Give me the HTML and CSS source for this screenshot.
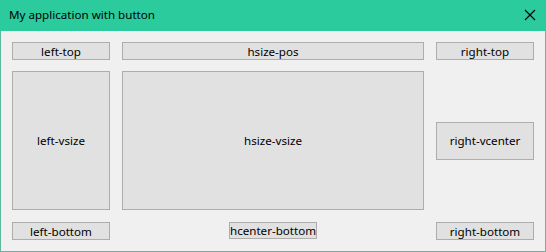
FILE: index.html
```html
<!DOCTYPE html>
<html lang="en">
<head>
  <meta charset="UTF-8">
  <title>My application with button</title>
  <link rel="stylesheet" href="styles.css">
</head>
<body>
  <div class="window">
    <div class="titlebar">
      <span class="title">My application with button</span>
      <svg class="close" width="12" height="12" viewBox="0 0 12 12">
        <path d="M1 1 L11 11 M11 1 L1 11" stroke="#000" stroke-width="1.1" fill="none" />
      </svg>
    </div>
    <div class="client">
      <button class="btn">left-top</button>
      <button class="btn">hsize-pos</button>
      <button class="btn">right-top</button>

      <button class="btn">left-vsize</button>
      <button class="btn">hsize-vsize</button>
      <div class="cell-vcenter">
        <button class="btn tall">right-vcenter</button>
      </div>

      <button class="btn">left-bottom</button>
      <div class="cell-hcenter">
        <button class="btn narrow">hcenter-bottom</button>
      </div>
      <button class="btn">right-bottom</button>
    </div>
  </div>
</body>
</html>
```

FILE: styles.css
```css
body { margin: 0; background: #f0f0f0; font-family: "Noto Sans", "Open Sans", sans-serif; }
.window {
  width: 544px;
  height: 251px;
  border: 1px solid #5fb9a1;
  border-top: none;
  background: #f0f0f0;
}
.titlebar {
  height: 31px;
  margin: 0 -1px;
  background: #2bcb9e;
  display: flex;
  align-items: center;
  justify-content: space-between;
  padding: 0 10px 0 9px;
}
.title { font-size: 11.6px; color: #000; padding-bottom: 2px; }
.close { display: block; margin-bottom: 2px; }
.client {
  display: grid;
  grid-template-columns: 98px 302px 98px;
  grid-template-rows: 18px 139px 18px;
  column-gap: 12px;
  row-gap: 11px;
  padding: 11px;
}
.client > :nth-child(7), .client > :nth-child(8), .client > :nth-child(9) { margin-top: 1px; }
.btn {
  margin: 0;
  padding: 0;
  background: #e1e1e1;
  border: 1px solid #adadad;
  font-family: inherit;
  font-size: 11.6px;
  color: #000;
  width: 100%;
  height: 100%;
  white-space: nowrap;
  overflow: visible;
}
.cell-vcenter { display: flex; align-items: center; }
.tall { height: 38px; }
.cell-hcenter { display: flex; justify-content: center; }
.narrow { width: 88px; }
```
